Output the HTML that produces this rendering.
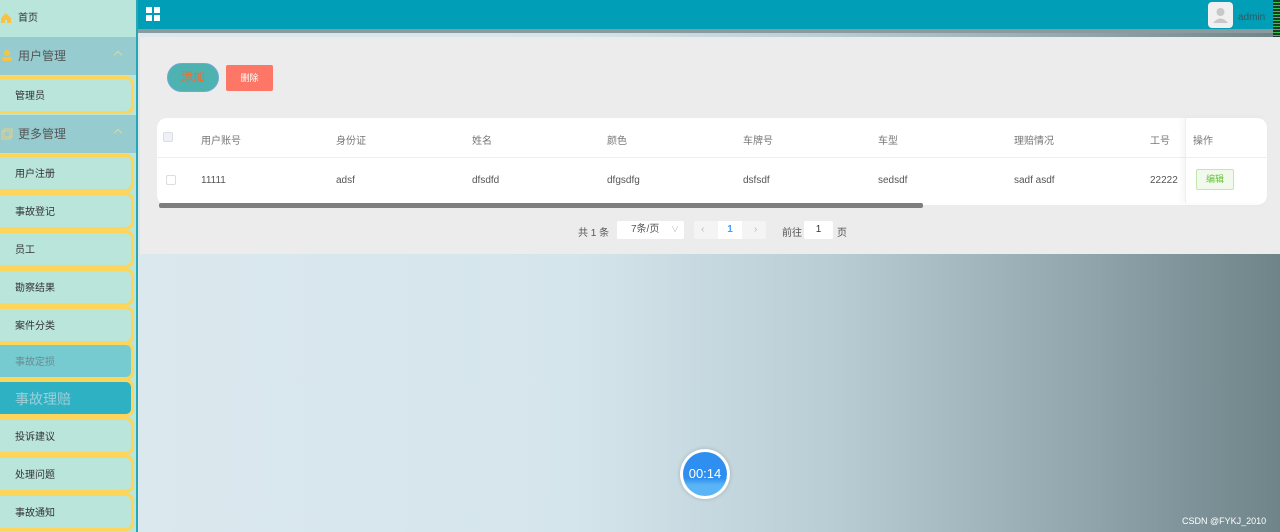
<!DOCTYPE html>
<html><head><meta charset="utf-8"><style>
*{box-sizing:border-box;margin:0;padding:0}
body{width:1280px;height:532px;overflow:hidden;position:relative;font-family:"Liberation Sans","Noto Sans CJK SC",sans-serif;font-size:10px;color:#333;background:linear-gradient(90deg,#dde9ef 0%,#d5e5ec 45%,#b9cdd4 65%,#90a5ac 85%,#6f8489 100%)}
.side{position:absolute;left:0;top:0;width:138px;height:532px;background:#b9e5da;border-right:2px solid #27a6b3}
.it{position:absolute;left:0;width:134px;height:38px;border:3px solid #fcd55a;border-left:none;border-radius:0 8px 8px 0;background:#b9e5da;padding-left:15px;line-height:35px;font-size:10px;color:#333}
.hd{position:absolute;left:0;width:136px;height:38px;background:#96cbcf;padding-left:18px;line-height:38px;font-size:12px;color:#555}
.chev{position:absolute;left:115px;top:15px;width:6px;height:6px;border-left:1px solid #d7dc9a;border-top:1px solid #d7dc9a;transform:rotate(45deg)}
.top{position:absolute;left:138px;top:0;width:1142px;height:33px;background:#009fb7;border-bottom:4px solid #8a9a9d}
.main{position:absolute;left:140px;top:37px;width:1140px;height:217px;background:#ececec}
.card{position:absolute;left:157px;top:118px;width:1110px;height:87px;background:#fff;border-radius:10px}
.th,.td{position:absolute;font-size:10px}
.th{top:132px;color:#777}.td{top:175px;color:#555}
.cb{position:absolute;width:10px;height:10px;border:1px solid #ddd;background:#fff;border-radius:2px}
</style></head><body>
<div class="side">
<div style="position:absolute;left:0;top:0;width:136px;height:37px;line-height:37px;padding-left:18px;font-size:10px;color:#333">首页</div>
<svg style="position:absolute;left:1px;top:13px" width="10" height="10" viewBox="0 0 10 10"><path d="M0 5L5 0L10 5V10H6V7H4V10H0Z" fill="#f6c343"/></svg>
<div class="hd" style="top:37px">用户管理<span class="chev"></span></div>
<svg style="position:absolute;left:2px;top:50px" width="10" height="11" viewBox="0 0 10 11"><circle cx="5" cy="3" r="3" fill="#f6c343"/><rect x="0" y="7" width="10" height="4" rx="2" fill="#f6c343"/></svg>
<div class="it" style="top:76px">管理员</div>
<div class="hd" style="top:115px">更多管理<span class="chev"></span></div>
<svg style="position:absolute;left:1px;top:128px" width="12" height="12" viewBox="0 0 12 12"><rect x="3" y="1" width="8" height="8" fill="none" stroke="#e5d18a"/><rect x="1" y="3" width="8" height="8" fill="none" stroke="#e5d18a"/></svg>
<div class="it" style="top:154px">用户注册</div>
<div class="it" style="top:192px">事故登记</div>
<div class="it" style="top:230px">员工</div>
<div class="it" style="top:268px">勘察结果</div>
<div class="it" style="top:306px">案件分类</div>
<div class="it" style="top:342px;background:#76cbd0;color:#6a8c90">事故定损</div>
<div class="it" style="top:379px;background:#2fb1c4;color:#9ccfd6;font-size:14px">事故理赔</div>
<div class="it" style="top:417px">投诉建议</div>
<div class="it" style="top:455px">处理问题</div>
<div class="it" style="top:493px">事故通知</div>
</div>
<div class="top"></div>
<svg style="position:absolute;left:146px;top:7px" width="15" height="15" viewBox="0 0 15 15" fill="#fff"><rect width="6" height="6"/><rect x="8" width="6" height="6"/><rect y="8" width="6" height="6"/><rect x="8" y="8" width="6" height="6"/></svg>
<div style="position:absolute;left:1208px;top:2px;width:25px;height:26px;background:#f0f0f0;border-radius:4px"><svg width="25" height="26" viewBox="0 0 25 26"><circle cx="12.5" cy="10" r="4" fill="#c8c8c8"/><path d="M5 21Q12.5 12 20 21Z" fill="#c8c8c8"/></svg></div>
<div style="position:absolute;left:1238px;top:12px;font-size:10px;color:#2a5b66">admin</div>
<div style="position:absolute;left:1273px;top:0;width:7px;height:38px;background:repeating-linear-gradient(#1a3a2a 0 2px,#2fc74a 2px 3px)"></div>
<div class="main"></div>
<div style="position:absolute;left:167px;top:63px;width:52px;height:29px;border-radius:15px;background:#4eb3b0;border:1px solid #6fa8d8;color:#f26b2b;font-size:12px;text-align:center;line-height:27px">添加</div>
<div style="position:absolute;left:226px;top:65px;width:47px;height:26px;border-radius:2px;background:#fd7666;color:#fff;font-size:9px;text-align:center;line-height:26px">删除</div>
<div class="card"></div>
<div style="position:absolute;left:157px;top:157px;width:1110px;height:1px;background:#ebeef5"></div>
<div style="position:absolute;left:159px;top:203px;width:764px;height:5px;background:#7e7e7e;border-radius:2px"></div>
<div style="position:absolute;left:1185px;top:118px;width:82px;height:85px;border-left:1px solid #eee;box-shadow:-3px 0 6px rgba(0,0,0,.04)"></div>
<div class="cb" style="left:163px;top:132px;background:#eef2f8"></div>
<div class="cb" style="left:166px;top:175px"></div>
<div class="th" style="left:201px">用户账号</div><div class="th" style="left:336px">身份证</div><div class="th" style="left:472px">姓名</div><div class="th" style="left:607px">颜色</div><div class="th" style="left:743px">车牌号</div><div class="th" style="left:878px">车型</div><div class="th" style="left:1014px">理赔情况</div><div class="th" style="left:1150px">工号</div><div class="th" style="left:1193px">操作</div>
<div class="td" style="left:201px">11111</div><div class="td" style="left:336px">adsf</div><div class="td" style="left:472px">dfsdfd</div><div class="td" style="left:607px">dfgsdfg</div><div class="td" style="left:743px">dsfsdf</div><div class="td" style="left:878px">sedsdf</div><div class="td" style="left:1014px">sadf asdf</div><div class="td" style="left:1150px">22222</div>
<div style="position:absolute;left:1196px;top:169px;width:38px;height:21px;border:1px solid #c2e7b0;background:#f0f9eb;color:#67c23a;font-size:9px;text-align:center;line-height:19px;border-radius:2px">编辑</div>
<div style="position:absolute;left:578px;top:224px;color:#555">共 1 条</div>
<div style="position:absolute;left:617px;top:221px;width:67px;height:18px;background:#fff;border-radius:2px;color:#555;padding-left:14px;line-height:18px">7条/页<span style="position:absolute;left:54px;color:#bbb;font-size:8px">∨</span></div>
<div style="position:absolute;left:694px;top:221px;width:72px;height:18px;background:#f4f4f5;border-radius:2px"></div>
<div style="position:absolute;left:718px;top:221px;width:24px;height:18px;background:#fff;color:#409eff;text-align:center;line-height:18px;font-weight:bold">1</div>
<div style="position:absolute;left:701px;top:224px;color:#bbb">‹</div><div style="position:absolute;left:754px;top:224px;color:#bbb">›</div>
<div style="position:absolute;left:782px;top:224px;color:#555">前往</div>
<div style="position:absolute;left:804px;top:221px;width:29px;height:18px;background:#fff;border-radius:2px;text-align:center;line-height:18px;color:#333">1</div>
<div style="position:absolute;left:837px;top:224px;color:#555">页</div>
<div style="position:absolute;left:680px;top:449px;width:50px;height:50px;border-radius:50%;background:#fff;box-shadow:0 0 4px rgba(0,0,0,.2)"><div style="position:absolute;left:3px;top:3px;width:44px;height:44px;border-radius:50%;background:linear-gradient(#2f8ff0 60%,#5ab4f5 75%);color:#fff;font-size:13px;text-align:center;line-height:44px">00:14</div></div>
<div style="position:absolute;left:1182px;top:516px;color:#fff;font-size:9px">CSDN @FYKJ_2010</div>
</body></html>
